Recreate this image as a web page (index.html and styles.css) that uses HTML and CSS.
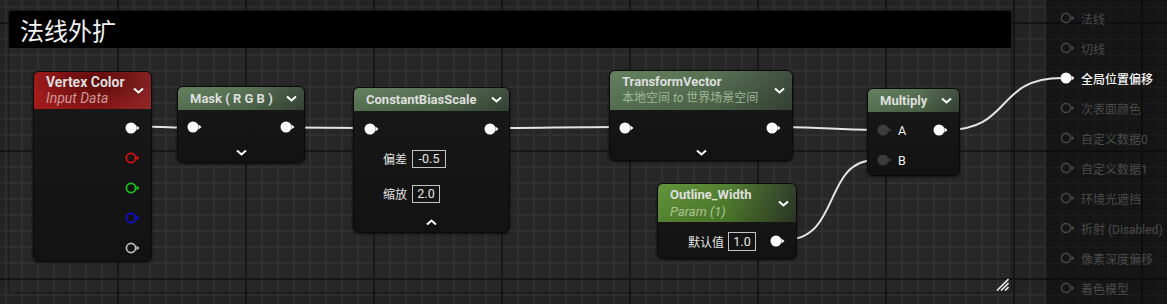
FILE: index.html
```html
<!DOCTYPE html>
<html>
<head>
<meta charset="utf-8">
<link rel="stylesheet" href="styles.css">
</head>
<body>
<div class="graph">
  <div class="comment">
    <div class="comment-title">法线外扩</div>
    <svg class="resize" width="13" height="13" viewBox="0 0 13 13"><path d="M1 12.5 L12.5 1 M5 12.5 L12.5 5 M9 12.5 L12.5 9" stroke="#e6e6e6" stroke-width="1.6" fill="none"/></svg>
  </div>

  <div class="panel">
    <div class="prow"><svg class="pin" width="16" height="12" viewBox="0 0 16 12"><circle cx="6" cy="6" r="4.6" fill="none" stroke="#444" stroke-width="1.6"/><path d="M11.5 3.5 L14.5 6 L11.5 8.5 Z" fill="#444"/></svg><span>法线</span></div>
    <div class="prow"><svg class="pin" width="16" height="12" viewBox="0 0 16 12"><circle cx="6" cy="6" r="4.6" fill="none" stroke="#444" stroke-width="1.6"/><path d="M11.5 3.5 L14.5 6 L11.5 8.5 Z" fill="#444"/></svg><span>切线</span></div>
    <div class="prow on"><svg class="pin" width="16" height="12" viewBox="0 0 16 12"><circle cx="6" cy="6" r="5.5" fill="#fff"/><path d="M11.5 3.5 L14.5 6 L11.5 8.5 Z" fill="#fff"/></svg><span>全局位置偏移</span></div>
    <div class="prow"><svg class="pin" width="16" height="12" viewBox="0 0 16 12"><circle cx="6" cy="6" r="4.6" fill="none" stroke="#444" stroke-width="1.6"/><path d="M11.5 3.5 L14.5 6 L11.5 8.5 Z" fill="#444"/></svg><span>次表面颜色</span></div>
    <div class="prow"><svg class="pin" width="16" height="12" viewBox="0 0 16 12"><circle cx="6" cy="6" r="4.6" fill="none" stroke="#444" stroke-width="1.6"/><path d="M11.5 3.5 L14.5 6 L11.5 8.5 Z" fill="#444"/></svg><span>自定义数据0</span></div>
    <div class="prow"><svg class="pin" width="16" height="12" viewBox="0 0 16 12"><circle cx="6" cy="6" r="4.6" fill="none" stroke="#444" stroke-width="1.6"/><path d="M11.5 3.5 L14.5 6 L11.5 8.5 Z" fill="#444"/></svg><span>自定义数据1</span></div>
    <div class="prow"><svg class="pin" width="16" height="12" viewBox="0 0 16 12"><circle cx="6" cy="6" r="4.6" fill="none" stroke="#444" stroke-width="1.6"/><path d="M11.5 3.5 L14.5 6 L11.5 8.5 Z" fill="#444"/></svg><span>环境光遮挡</span></div>
    <div class="prow"><svg class="pin" width="16" height="12" viewBox="0 0 16 12"><circle cx="6" cy="6" r="4.6" fill="none" stroke="#444" stroke-width="1.6"/><path d="M11.5 3.5 L14.5 6 L11.5 8.5 Z" fill="#444"/></svg><span>折射 (Disabled)</span></div>
    <div class="prow"><svg class="pin" width="16" height="12" viewBox="0 0 16 12"><circle cx="6" cy="6" r="4.6" fill="none" stroke="#444" stroke-width="1.6"/><path d="M11.5 3.5 L14.5 6 L11.5 8.5 Z" fill="#444"/></svg><span>像素深度偏移</span></div>
    <div class="prow"><svg class="pin" width="16" height="12" viewBox="0 0 16 12"><circle cx="6" cy="6" r="4.6" fill="none" stroke="#444" stroke-width="1.6"/><path d="M11.5 3.5 L14.5 6 L11.5 8.5 Z" fill="#444"/></svg><span>着色模型</span></div>
  </div>

  <svg class="wires" width="1167" height="304" viewBox="0 0 1167 304">
    <g fill="none" stroke="#e4e4e4" stroke-width="2">
      <path d="M140 126.5 C160 126.5 165 127.5 186 127.5"/>
      <path d="M294 127.5 C320 127.5 335 128 363 128"/>
      <path d="M497 128 C540 128 570 127 618 127"/>
      <path d="M780 127 C830 127 830 130 876 130"/>
      <path d="M784 240 C842 240 822 160 876 160"/>
      <path d="M947 130 C1012 130 995 78 1062 78"/>
    </g>
  </svg>

  <!-- Vertex Color -->
  <div class="node vc">
    <div class="hd hd-red">
      <div class="hd-text"><div class="ttl">Vertex Color</div><div class="sub sub-red">Input Data</div></div>
      <svg class="chev" width="11" height="7" viewBox="0 0 11 7"><path d="M1 1.5 L5.5 5.5 L10 1.5" fill="none" stroke="#fff" stroke-width="2"/></svg>
    </div>
    <div class="bd vc-bd">
      <div class="row out"><svg class="pin" width="16" height="12" viewBox="0 0 16 12"><circle cx="6" cy="6" r="5.5" fill="#fff"/><path d="M11.5 3.5 L14.5 6 L11.5 8.5 Z" fill="#fff"/></svg></div>
      <div class="row out"><svg class="pin" width="16" height="12" viewBox="0 0 16 12"><circle cx="6" cy="6" r="4.6" fill="none" stroke="#e01010" stroke-width="1.7"/><path d="M11.5 3.5 L14.5 6 L11.5 8.5 Z" fill="#e01010"/></svg></div>
      <div class="row out"><svg class="pin" width="16" height="12" viewBox="0 0 16 12"><circle cx="6" cy="6" r="4.6" fill="none" stroke="#18c818" stroke-width="1.7"/><path d="M11.5 3.5 L14.5 6 L11.5 8.5 Z" fill="#18c818"/></svg></div>
      <div class="row out"><svg class="pin" width="16" height="12" viewBox="0 0 16 12"><circle cx="6" cy="6" r="4.6" fill="none" stroke="#1010d8" stroke-width="1.7"/><path d="M11.5 3.5 L14.5 6 L11.5 8.5 Z" fill="#1010d8"/></svg></div>
      <div class="row out"><svg class="pin" width="16" height="12" viewBox="0 0 16 12"><circle cx="6" cy="6" r="4.6" fill="none" stroke="#bdbdbd" stroke-width="1.7"/><path d="M11.5 3.5 L14.5 6 L11.5 8.5 Z" fill="#bdbdbd"/></svg></div>
    </div>
  </div>

  <!-- Mask -->
  <div class="node mask">
    <div class="hd hd-green one">
      <div class="hd-text"><div class="ttl">Mask ( R G B )</div></div>
      <svg class="chev" width="11" height="7" viewBox="0 0 11 7"><path d="M1 1.5 L5.5 5.5 L10 1.5" fill="none" stroke="#fff" stroke-width="2"/></svg>
    </div>
    <div class="bd mask-bd">
      <div class="row io"><svg class="pin" width="16" height="12" viewBox="0 0 16 12"><circle cx="6" cy="6" r="5.5" fill="#fff"/><path d="M11.5 3.5 L14.5 6 L11.5 8.5 Z" fill="#fff"/></svg><svg class="pin" width="16" height="12" viewBox="0 0 16 12"><circle cx="6" cy="6" r="5.5" fill="#fff"/><path d="M11.5 3.5 L14.5 6 L11.5 8.5 Z" fill="#fff"/></svg></div>
      <div class="row expand"><svg width="11" height="7" viewBox="0 0 11 7"><path d="M1 1.5 L5.5 5.5 L10 1.5" fill="none" stroke="#fff" stroke-width="2"/></svg></div>
    </div>
  </div>

  <!-- ConstantBiasScale -->
  <div class="node cbs">
    <div class="hd hd-green one">
      <div class="hd-text"><div class="ttl">ConstantBiasScale</div></div>
      <svg class="chev" width="11" height="7" viewBox="0 0 11 7"><path d="M1 1.5 L5.5 5.5 L10 1.5" fill="none" stroke="#fff" stroke-width="2"/></svg>
    </div>
    <div class="bd cbs-bd">
      <div class="row io"><svg class="pin" width="16" height="12" viewBox="0 0 16 12"><circle cx="6" cy="6" r="5.5" fill="#fff"/><path d="M11.5 3.5 L14.5 6 L11.5 8.5 Z" fill="#fff"/></svg><svg class="pin" width="16" height="12" viewBox="0 0 16 12"><circle cx="6" cy="6" r="5.5" fill="#fff"/><path d="M11.5 3.5 L14.5 6 L11.5 8.5 Z" fill="#fff"/></svg></div>
      <div class="param"><span class="lbl">偏差</span><span class="val w34">-0.5</span></div>
      <div class="param"><span class="lbl">缩放</span><span class="val w27">2.0</span></div>
      <div class="row collapse"><svg width="11" height="7" viewBox="0 0 11 7"><path d="M1 5.5 L5.5 1.5 L10 5.5" fill="none" stroke="#fff" stroke-width="2"/></svg></div>
    </div>
  </div>

  <!-- TransformVector -->
  <div class="node tv">
    <div class="hd hd-green two">
      <div class="hd-text"><div class="ttl">TransformVector</div><div class="sub sub-green">本地空间 <i>to</i> 世界场景空间</div></div>
      <svg class="chev" width="11" height="7" viewBox="0 0 11 7"><path d="M1 1.5 L5.5 5.5 L10 1.5" fill="none" stroke="#fff" stroke-width="2"/></svg>
    </div>
    <div class="bd tv-bd">
      <div class="row io"><svg class="pin" width="16" height="12" viewBox="0 0 16 12"><circle cx="6" cy="6" r="5.5" fill="#fff"/><path d="M11.5 3.5 L14.5 6 L11.5 8.5 Z" fill="#fff"/></svg><svg class="pin" width="16" height="12" viewBox="0 0 16 12"><circle cx="6" cy="6" r="5.5" fill="#fff"/><path d="M11.5 3.5 L14.5 6 L11.5 8.5 Z" fill="#fff"/></svg></div>
      <div class="row expand"><svg width="11" height="7" viewBox="0 0 11 7"><path d="M1 1.5 L5.5 5.5 L10 1.5" fill="none" stroke="#fff" stroke-width="2"/></svg></div>
    </div>
  </div>

  <!-- Outline_Width -->
  <div class="node ow">
    <div class="hd hd-bright two">
      <div class="hd-text"><div class="ttl">Outline_Width</div><div class="sub sub-bright">Param (1)</div></div>
      <svg class="chev" width="11" height="7" viewBox="0 0 11 7"><path d="M1 1.5 L5.5 5.5 L10 1.5" fill="none" stroke="#fff" stroke-width="2"/></svg>
    </div>
    <div class="bd ow-bd">
      <div class="row ow-row"><span class="lbl">默认值</span><span class="val w28">1.0</span><svg class="pin push" width="16" height="12" viewBox="0 0 16 12"><circle cx="6" cy="6" r="5.5" fill="#fff"/><path d="M11.5 3.5 L14.5 6 L11.5 8.5 Z" fill="#fff"/></svg></div>
    </div>
  </div>

  <!-- Multiply -->
  <div class="node mul">
    <div class="hd hd-green one">
      <div class="hd-text"><div class="ttl">Multiply</div></div>
      <svg class="chev" width="11" height="7" viewBox="0 0 11 7"><path d="M1 1.5 L5.5 5.5 L10 1.5" fill="none" stroke="#fff" stroke-width="2"/></svg>
    </div>
    <div class="bd mul-bd">
      <div class="row mrow"><svg class="pin" width="16" height="12" viewBox="0 0 16 12"><circle cx="6" cy="6" r="5.5" fill="#3c3c3c"/><path d="M11.5 3.5 L14.5 6 L11.5 8.5 Z" fill="#3c3c3c"/></svg><span class="pl">A</span><svg class="pin push" width="16" height="12" viewBox="0 0 16 12"><circle cx="6" cy="6" r="5.5" fill="#fff"/><path d="M11.5 3.5 L14.5 6 L11.5 8.5 Z" fill="#fff"/></svg></div>
      <div class="row mrow"><svg class="pin" width="16" height="12" viewBox="0 0 16 12"><circle cx="6" cy="6" r="5.5" fill="#3c3c3c"/><path d="M11.5 3.5 L14.5 6 L11.5 8.5 Z" fill="#3c3c3c"/></svg><span class="pl">B</span></div>
    </div>
  </div>
</div>
</body>
</html>
```

FILE: styles.css
```css
* { box-sizing: border-box; }

body {
  margin: 0;
  background: #242424;
  overflow: hidden;
  font-family: Roboto, "Noto Sans CJK SC", sans-serif;
}

.graph {
  position: relative;
  width: 1167px;
  height: 304px;
  overflow: hidden;
  background-color: #242424;
  background-image:
    linear-gradient(to right, #141414 2px, transparent 2px),
    linear-gradient(to bottom, #141414 2px, transparent 2px),
    linear-gradient(to right, #2d2d2d 2px, transparent 2px),
    linear-gradient(to bottom, #2d2d2d 2px, transparent 2px);
  background-size: 128px 128px, 128px 128px, 16px 16px, 16px 16px;
  background-position: 117px 0, 0 150px, 5px 0, 0 6px;
}

/* comment box */
.comment {
  position: absolute;
  left: 8px;
  top: 10px;
  width: 1004px;
  height: 283px;
  border: 1px solid rgba(0, 0, 0, 0.35);
  border-radius: 4px;
  background: rgba(255, 255, 255, 0.015);
}

.comment-title {
  height: 37px;
  background: #000;
  border-radius: 2px;
  color: #f2f2f2;
  font-family: "Noto Sans CJK SC", sans-serif;
  font-size: 24px;
  line-height: 37px;
  padding-left: 11px;
}

.resize {
  position: absolute;
  right: 2px;
  bottom: 1px;
}

/* output panel */
.panel {
  position: absolute;
  left: 1046px;
  top: 0;
  width: 121px;
  height: 304px;
  background: rgba(10, 10, 10, 0.55);
  padding-top: 3px;
  display: flex;
  flex-direction: column;
}

.prow {
  height: 30px;
  display: flex;
  align-items: center;
  gap: 5px;
  padding-left: 14px;
  color: #4a4a4a;
  font-size: 12px;
  white-space: nowrap;
}

.prow.on {
  color: #f4f4f4;
  font-weight: 500;
}

.pin { display: block; flex: none; }

.wires {
  position: absolute;
  left: 0;
  top: 0;
}

/* nodes */
.node {
  position: absolute;
  display: flex;
  flex-direction: column;
  border-radius: 6px;
  background: linear-gradient(to bottom, #181918, #111211);
  border: 1px solid #0a0a0a;
  box-shadow: 0 1px 3px rgba(0, 0, 0, 0.6);
}

.hd {
  display: flex;
  align-items: center;
  justify-content: space-between;
  padding: 0 7px 0 12px;
  border-radius: 5px 5px 0 0;
  flex: none;
}

.hd-red {
  height: 37px;
  background:
    radial-gradient(ellipse 60% 70% at 55% 25%, rgba(40, 0, 0, 0.45), transparent),
    linear-gradient(to right, #a41c1c, #861414 50%, #8f2626);
}

.hd-green {
  background:
    linear-gradient(to bottom, rgba(255, 255, 255, 0.04), rgba(0, 0, 0, 0.12)),
    linear-gradient(to right, #5e7c59, #536e4f 55%, #3a4839);
}

.hd-bright {
  background:
    linear-gradient(to bottom, rgba(255, 255, 255, 0.03), rgba(0, 0, 0, 0.1)),
    linear-gradient(to right, #5e9136, #4f7d2c 50%, #2d3a26);
}

.hd.one { height: 23px; }
.hd.two { height: 38px; }

.hd-text {
  display: flex;
  flex-direction: column;
}

.ttl {
  font-size: 13px;
  font-weight: 700;
  color: #dedede;
  line-height: 16px;
  white-space: nowrap;
}

.vc .ttl { font-size: 14px; }

.sub {
  font-size: 13px;
  line-height: 17px;
  white-space: nowrap;
}

.sub-red { font-style: italic; color: #c99a9a; font-size: 14px; }
.sub-green { color: #9fb797; font-size: 12px; }
.sub-bright { font-style: italic; color: #aac592; }

.chev { display: block; flex: none; }

.bd {
  flex: 1;
  display: flex;
  flex-direction: column;
}

.row {
  display: flex;
  align-items: center;
}

.row.out {
  height: 30px;
  justify-content: flex-end;
  padding-right: 10px;
}

.row.io {
  height: 24px;
  justify-content: space-between;
  padding: 0 9px;
}

.row.expand, .row.collapse {
  justify-content: center;
}

.vc { left: 33px; top: 71px; width: 119px; height: 191px; }
.vc-bd { padding-top: 4px; }

.mask { left: 177px; top: 86px; width: 128px; height: 77px; }
.mask-bd { padding-top: 5px; }
.mask-bd .row.io { padding: 0 8px 0 9px; }
.mask-bd .expand { height: 26px; }

.cbs { left: 353px; top: 87px; width: 157px; height: 146px; }
.cbs-bd { padding-top: 6px; }
.cbs-bd .row.io { padding: 0 9px 0 10px; }
.cbs-bd .collapse { height: 22px; }

.param {
  height: 35px;
  display: flex;
  align-items: center;
  padding-left: 29px;
  gap: 5px;
}

.param:first-of-type { margin-top: 2px; }

.lbl {
  color: #e2e2e2;
  font-size: 12px;
  white-space: nowrap;
}

.val {
  height: 18px;
  border: 1px solid #c4c4c4;
  color: #e6e6e6;
  font-size: 12.5px;
  line-height: 16px;
  text-align: center;
}

.w34 { width: 34px; }
.w27 { width: 28px; }
.w28 { width: 28px; height: 19px; line-height: 17px; }

.tv { left: 609px; top: 70px; width: 184px; height: 91px; }
.tv .hd.two { height: 39px; }
.tv-bd { padding-top: 6px; }
.tv-bd .row.io { padding: 0 10px 0 9px; }
.tv-bd .expand { height: 24px; }

.ow { left: 657px; top: 183px; width: 140px; height: 76px; }
.ow-bd { padding-top: 7px; }
.ow-row {
  height: 24px;
  padding: 0 10px 0 30px;
  gap: 4px;
}

.push { margin-left: auto; }

.mul { left: 867px; top: 88px; width: 93px; height: 88px; }
.mul-bd { padding-top: 3px; }
.mrow {
  height: 30px;
  padding: 0 10px 0 9px;
}

.pl {
  color: #f0f0f0;
  font-size: 12.5px;
  margin-left: 5px;
}
```
